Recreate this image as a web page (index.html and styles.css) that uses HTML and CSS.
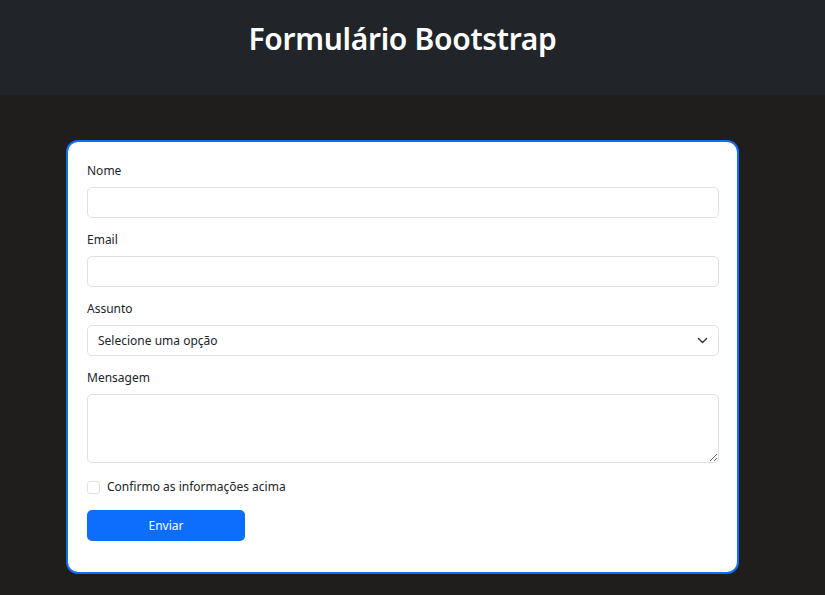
FILE: index.html
```html
<!DOCTYPE html>
<html lang="pt-BR">
<head>
<meta charset="utf-8">
<title>Formulário Bootstrap</title>
<link rel="stylesheet" href="styles.css">
</head>
<body>
<header class="topbar">
  <h1 class="title">Formulário Bootstrap</h1>
</header>
<main class="main">
  <form class="card">
    <div class="field">
      <label class="label" for="nome">Nome</label>
      <input class="control" id="nome" type="text">
    </div>
    <div class="field">
      <label class="label" for="email">Email</label>
      <input class="control" id="email" type="email">
    </div>
    <div class="field">
      <label class="label" for="assunto">Assunto</label>
      <div class="select-wrap">
        <select class="control select" id="assunto">
          <option>Selecione uma opção</option>
        </select>
        <svg class="chev" width="12" height="12" viewBox="0 0 16 16"><path d="M2 5l6 6 6-6" fill="none" stroke="#343a40" stroke-width="2" stroke-linecap="round" stroke-linejoin="round"/></svg>
      </div>
    </div>
    <div class="field">
      <label class="label" for="msg">Mensagem</label>
      <textarea class="control area" id="msg"></textarea>
    </div>
    <div class="check-row">
      <input class="check" id="conf" type="checkbox">
      <label class="check-label" for="conf">Confirmo as informações acima</label>
    </div>
    <button class="btn" type="button">Enviar</button>
  </form>
</main>
</body>
</html>
```
FILE: styles.css
```css
* { box-sizing: border-box; }
html, body { margin: 0; padding: 0; }
body {
  background: #1f1e1c;
  font-family: "Noto Sans", "Open Sans", sans-serif;
  color: #212529;
  height: 595px;
  overflow: hidden;
}
.topbar {
  background: #212529;
  height: 95px;
  padding: 19px 20px 0 0;
}
.title {
  margin: 0;
  text-align: center;
  color: #fff;
  font-size: 30px;
  font-weight: 600;
  line-height: 40px;
  letter-spacing: -0.3px;
}
.main {
  padding: 45px 0 0 66px;
}
.card {
  width: 673px;
  background: #fff;
  border: 2px solid #0d6efd;
  border-radius: 12px;
  padding: 19px 18px 18px 19px;
  display: flex;
  flex-direction: column;
}
.field {
  display: flex;
  flex-direction: column;
  margin-bottom: 12px;
}
.label {
  font-size: 12px;
  line-height: 20px;
  margin-bottom: 6px;
}
.control {
  display: block;
  width: 100%;
  height: 31px;
  border: 1px solid #dee2e6;
  border-radius: 5px;
  background: #fff;
  font-family: inherit;
  font-size: 12px;
  color: #212529;
  padding: 0 10px;
  outline: none;
}
.select-wrap { position: relative; }
.select {
  appearance: none;
  -webkit-appearance: none;
}
.chev {
  position: absolute;
  right: 11px;
  top: 10px;
  width: 11px;
  height: 11px;
}
.area {
  height: 69px;
  resize: vertical;
  padding: 5px 10px;
}
.check-row {
  display: flex;
  align-items: center;
  height: 20px;
  margin-top: 2px;
  margin-bottom: 13px;
}
.check {
  appearance: none;
  -webkit-appearance: none;
  width: 13px;
  height: 13px;
  margin: 0 7px 0 0;
  border: 1px solid #dee2e6;
  border-radius: 3px;
  background: #fff;
}
.check-label {
  font-size: 12px;
  line-height: 20px;
}
.btn {
  width: 158px;
  height: 31px;
  border: none;
  border-radius: 5px;
  background: #0d6efd;
  color: #fff;
  font-family: inherit;
  font-size: 12px;
  margin-bottom: 13px;
}
```
